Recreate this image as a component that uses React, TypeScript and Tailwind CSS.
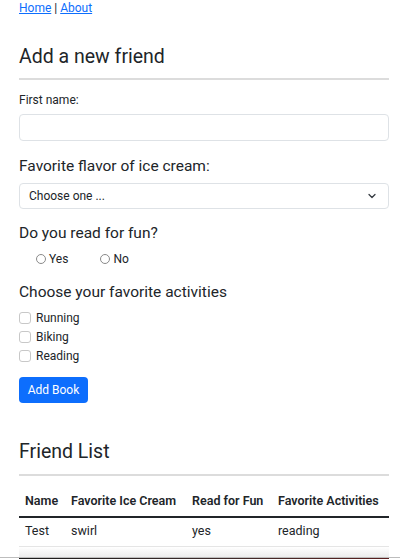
import { ChevronDown } from 'lucide-react';

const activities = ['Running', 'Biking', 'Reading'];

const friends = [{ name: 'Test', flavor: 'swirl', reads: 'yes', activities: 'reading' }];

export default function App() {
  return (
    <div className="min-h-[559px] bg-white px-[19px] pt-[1px] font-['Roboto',sans-serif] text-[#212529] overflow-hidden">
      <nav className="text-[12px] leading-[14px]">
        <a href="#" className="text-[#0d6efd] underline">Home</a> | <a href="#" className="text-[#0d6efd] underline">About</a>
      </nav>

      <h3 className="mt-[30px] text-[19.5px] leading-[24px] font-normal">Add a new friend</h3>
      <hr className="mt-[9px] border-t-2 border-[#dcdcdc] w-[370px]" />

      <form className="w-[370px]">
        <label className="mt-[12px] block text-[12px] leading-[16px]">First name:</label>
        <input className="mt-[6px] block h-[27px] w-full rounded-[4px] border border-[#dee2e6] px-2 text-[12px]" />

        <label className="mt-[15px] block text-[15.5px] leading-[20px]">Favorite flavor of ice cream:</label>
        <div className="mt-[7px] flex h-[26px] items-center justify-between rounded-[4px] border border-[#dee2e6] pl-[9px] pr-[10px] text-[12px]">
          <span>Choose one ...</span>
          <ChevronDown size={12} strokeWidth={2.5} className="text-[#343a40]" />
        </div>

        <div className="mt-[14px] text-[15.5px] leading-[20px]">Do you read for fun?</div>
        <div className="mt-[8px] flex items-center pl-[17px] text-[12px] leading-[16px]">
          <span className="flex items-center gap-[3px]">
            <span className="inline-block h-[10px] w-[10px] rounded-full border border-[#8a8a8a]" />
            Yes
          </span>
          <span className="ml-[32px] flex items-center gap-[3px]">
            <span className="inline-block h-[10px] w-[10px] rounded-full border border-[#8a8a8a]" />
            No
          </span>
        </div>

        <div className="mt-[15px] text-[15.5px] leading-[20px]">Choose your favorite activities</div>
        <div className="mt-[7px] flex flex-col gap-[1px]">
          {activities.map((a) => (
            <label key={a} className="flex items-center gap-[5px] text-[12px] leading-[18px]">
              <span className="inline-block h-[12px] w-[12px] rounded-[3px] border border-[#c8c8c8]" />
              {a}
            </label>
          ))}
        </div>

        <button type="button" className="mt-[12px] h-[26px] w-[69px] rounded-[4px] bg-[#0d6efd] text-[12px] text-white">
          Add Book
        </button>
      </form>

      <h3 className="mt-[37px] text-[19.5px] leading-[24px] font-normal">Friend List</h3>
      <hr className="mt-[10px] border-t-2 border-[#dcdcdc] w-[370px]" />

      <table className="mt-[10px] w-[370px] table-fixed text-left text-[12.5px] whitespace-nowrap">
        <colgroup>
          <col className="w-[46px]" />
          <col className="w-[121px]" />
          <col className="w-[86px]" />
          <col className="w-[117px]" />
        </colgroup>
        <thead>
          <tr className="border-b-2 border-[#212529]">
            <th className="h-[31px] px-[6px] font-semibold">Name</th>
            <th className="px-[6px] font-semibold">Favorite Ice Cream</th>
            <th className="px-[6px] font-semibold">Read for Fun</th>
            <th className="px-[6px] font-semibold">Favorite Activities</th>
          </tr>
        </thead>
        <tbody>
          {friends.map((f) => (
            <tr key={f.name} className="border-b border-[#e5e5e5]">
              <td className="h-[29px] px-[6px]">{f.name}</td>
              <td className="px-[6px]">{f.flavor}</td>
              <td className="px-[6px]">{f.reads}</td>
              <td className="px-[6px]">{f.activities}</td>
            </tr>
          ))}
        </tbody>
      </table>
      <div className="h-[10px] w-[370px] bg-gradient-to-b from-white to-[#ececec]" />
      <div className="-mx-[19px] h-[1px] bg-[#bdbdbd]" />
      <div className="h-[3px] w-[370px] bg-gradient-to-r from-[#1a1a1a] via-[#3a2a2a] to-[#5a1e1e]" />
    </div>
  );
}
